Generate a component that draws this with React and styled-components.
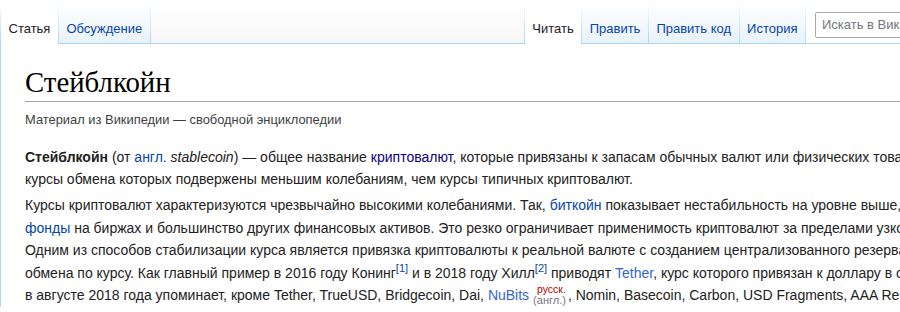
import React from 'react'
import styled, { createGlobalStyle } from 'styled-components'

const GlobalStyle = createGlobalStyle`
  html, body {
    margin: 0;
    padding: 0;
    background: #fff;
    overflow: hidden;
  }
  body {
    font-family: "Liberation Sans", Arial, sans-serif;
    color: #222;
  }
`

const Page = styled.div`
  width: 900px;
  height: 312px;
  overflow: hidden;
  background: #fff;
`

const Head = styled.div`
  display: flex;
  align-items: flex-end;
  height: 44px;
  background: #fff;
`

const Tab = styled.div`
  box-sizing: border-box;
  height: 41px;
  padding: 18px 7.5px 0;
  font-size: 13px;
  line-height: 16px;
  white-space: nowrap;
  color: ${(p) => (p.$selected ? '#222' : '#0645ad')};
  background: ${(p) =>
    p.$selected ? '#fff' : 'linear-gradient(to bottom, #fff 0%, #e8f2f8 100%)'};
  border-bottom: ${(p) => (p.$selected ? 'none' : '1px solid #a7d7f9')};
`

const Sep = styled.div`
  flex: none;
  width: 1px;
  height: 41px;
  background: linear-gradient(to bottom, rgba(167, 215, 249, 0) 0%, #a7d7f9 100%);
`

const Gap = styled.div`
  flex: 1;
  box-sizing: border-box;
  height: 41px;
  background: linear-gradient(to bottom, #fff 0%, #f6f6f6 100%);
  border-bottom: 1px solid #a7d7f9;
`

const SearchArea = styled.div`
  flex: 0 0 94px;
  box-sizing: border-box;
  height: 44px;
  padding: 12px 0 0 9px;
  overflow: hidden;
  border-bottom: 1px solid #a7d7f9;
`

const SearchInput = styled.div`
  box-sizing: border-box;
  width: 220px;
  height: 26px;
  padding: 0 6px;
  border: 1px solid #a2a9b1;
  border-radius: 2px;
  background: #fff;
  font-size: 13px;
  line-height: 24px;
  color: #72777d;
  white-space: nowrap;
`

const Content = styled.div`
  border-left: 1px solid #a7d7f9;
  padding: 20px 0 0 24px;
  background: #fff;
`

const Title = styled.h1`
  margin: 0 0 7.2px;
  padding: 0;
  font-family: "Liberation Serif", "Times New Roman", serif;
  font-weight: normal;
  font-size: 28.8px;
  line-height: 1.3;
  color: #000;
  border-bottom: 1px solid #a2a9b1;
`

const SiteSub = styled.div`
  font-size: 12.9px;
  line-height: 20.6px;
  color: #3c3f42;
  margin-bottom: 15.6px;
`

const Para = styled.div`
  font-size: 14px;
  margin-bottom: 3px;
`

const Line = styled.div`
  height: 22.6px;
  line-height: 22.6px;
  white-space: nowrap;
`

const Link = styled.span`
  color: ${(p) => p.$color || '#0645ad'};
`

const Ref = styled.sup`
  font-size: 11px;
  line-height: 1;
  color: #0645ad;
`

const Interwiki = styled.span`
  display: inline-flex;
  flex-direction: column;
  align-items: flex-end;
  vertical-align: 7px;
  margin: 0 2px 0 4px;
  line-height: 11px;
`

const Ru = styled.span`
  font-size: 10.5px;
  color: #ba0000;
`

const En = styled.span`
  font-size: 11px;
  color: #72777d;
`

const App = () => {
  return (
    <Page>
      <GlobalStyle />
      <Head>
        <Sep />
        <Tab $selected>Статья</Tab>
        <Sep />
        <Tab>Обсуждение</Tab>
        <Sep />
        <Gap />
        <Sep />
        <Tab $selected>Читать</Tab>
        <Sep />
        <Tab>Править</Tab>
        <Sep />
        <Tab>Править код</Tab>
        <Sep />
        <Tab>История</Tab>
        <Sep />
        <SearchArea>
          <SearchInput>Искать в Википедии</SearchInput>
        </SearchArea>
      </Head>
      <Content>
        <Title>Стейблкойн</Title>
        <SiteSub>Материал из Википедии — свободной энциклопедии</SiteSub>
        <Para>
          <Line>
            <b>Стейблкойн</b> (от <Link>англ.</Link> <i>stablecoin</i>) — общее название{' '}
            <Link $color="#0b0080">криптовалют</Link>, которые привязаны к запасам обычных валют или
            физических товаров (например, драгоценных металлов)
          </Line>
          <Line>курсы обмена которых подвержены меньшим колебаниям, чем курсы типичных криптовалют.</Line>
        </Para>
        <Para>
          <Line>
            Курсы криптовалют характеризуются чрезвычайно высокими колебаниями. Так,{' '}
            <Link>биткойн</Link> показывает нестабильность на уровне выше, чем
          </Line>
          <Line>
            <Link>фонды</Link> на биржах и большинство других финансовых активов. Это резко ограничивает
            применимость криптовалют за пределами узкого
          </Line>
          <Line>
            Одним из способов стабилизации курса является привязка криптовалюты к реальной валюте с
            созданием централизованного резерва
          </Line>
          <Line>
            обмена по курсу. Как главный пример в 2016 году Конинг<Ref>[1]</Ref> и в 2018 году Хилл
            <Ref>[2]</Ref> приводят <Link $color="#3366cc">Tether</Link>, курс которого привязан к
            доллару в соотношении
          </Line>
          <Line>
            в августе 2018 года упоминает, кроме Tether, TrueUSD, Bridgecoin, Dai,{' '}
            <Link $color="#3366cc">NuBits</Link>
            <Interwiki>
              <Ru>русск.</Ru>
              <En>(англ.)</En>
            </Interwiki>
            , Nomin, Basecoin, Carbon, USD Fragments, AAA Reserve
          </Line>
        </Para>
      </Content>
    </Page>
  )
}

export default App
